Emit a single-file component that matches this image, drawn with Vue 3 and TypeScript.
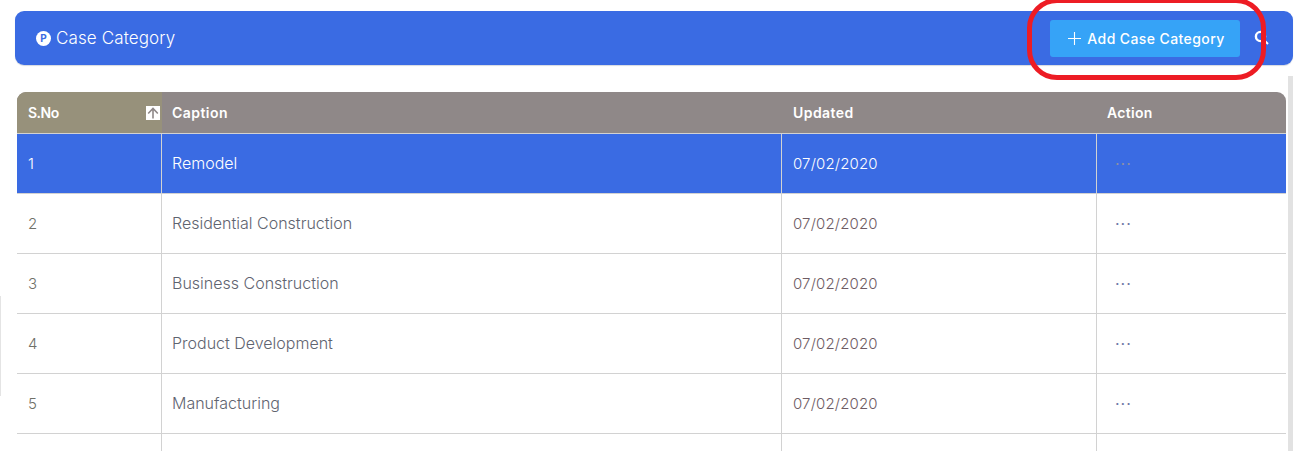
<script setup lang="ts">
interface Row { no: number; caption: string; updated: string }
const rows: Row[] = [
  { no: 1, caption: 'Remodel', updated: '07/02/2020' },
  { no: 2, caption: 'Residential Construction', updated: '07/02/2020' },
  { no: 3, caption: 'Business Construction', updated: '07/02/2020' },
  { no: 4, caption: 'Product Development', updated: '07/02/2020' },
  { no: 5, caption: 'Manufacturing', updated: '07/02/2020' },
  { no: 6, caption: '', updated: '' },
]
</script>

<template>
  <div class="page">
    <header class="bar">
      <div class="title">
        <span class="badge">P</span>
        <span class="title-text">Case Category</span>
      </div>
      <div class="tools">
        <button class="add" type="button">
          <svg class="plus" width="13" height="13" viewBox="0 0 13 13"><path d="M6.5 0v13M0 6.5h13" stroke="#fff" stroke-width="1.1" fill="none" /></svg>
          <span>Add Case Category</span>
        </button>
        <svg class="search" width="16" height="16" viewBox="0 0 16 16"><circle cx="6.5" cy="6.5" r="4.6" fill="none" stroke="#fff" stroke-width="2.4" /><path d="M10 10l4 4" stroke="#fff" stroke-width="2" /></svg>
      </div>
    </header>
    <div class="ring"></div>
    <div class="content">
      <div class="table">
        <div class="row head">
          <div class="cell sno"><span class="sno-label">S.No</span>
            <span class="sort"><svg width="14" height="14" viewBox="0 0 14 14"><rect width="14" height="14" fill="#fff" /><path d="M7 12.5V2.5M2.2 7.5L7 2.5l4.8 5" fill="none" stroke="#8f8888" stroke-width="1.6" /></svg></span>
          </div>
          <div class="cell">Caption</div>
          <div class="cell">Updated</div>
          <div class="cell">Action</div>
        </div>
        <div v-for="r in rows" :key="r.no" class="row body" :class="{ active: r.no === 1 }">
          <div class="cell num">{{ r.no === 6 ? '' : r.no }}</div>
          <div class="cell cap">{{ r.caption }}</div>
          <div class="cell date">{{ r.updated }}</div>
          <div class="cell act"><span v-if="r.no !== 6" class="dots">···</span></div>
        </div>
      </div>
      <div class="scroll"></div>
    </div>
    <div class="sliver"></div>
  </div>
</template>

<style>
html, body { margin: 0; background: #fff; overflow: hidden; }
</style>

<style scoped>
.page {
  position: relative;
  width: 1312px;
  height: 451px;
  overflow: hidden;
  padding: 11px 19px 0 15px;
  box-sizing: border-box;
  font-family: "Inter", "Open Sans", sans-serif;
  color: #fff;
}
.bar {
  height: 54px;
  background: #3a6be3;
  border-radius: 9px;
  box-shadow: 0 1px 1px #d5d9e0;
  display: flex;
  align-items: center;
  justify-content: space-between;
  padding: 0 23px 0 21px;
}
.title { display: flex; align-items: center; gap: 5px; }
.badge {
  width: 15px;
  height: 15px;
  border-radius: 50%;
  background: #fff;
  color: #3a6be3;
  font-size: 10px;
  font-weight: 700;
  display: flex;
  align-items: center;
  justify-content: center;
}
.title-text { font-size: 17px; font-weight: 300; letter-spacing: 0.12px; }
.tools { display: flex; align-items: center; gap: 14px; }
.add {
  width: 190px;
  height: 37px;
  background: #36a3f7;
  border: 0;
  border-radius: 3px;
  color: #fff;
  font: 500 14px "Inter", sans-serif;
  letter-spacing: 0.4px;
  display: flex;
  align-items: center;
  justify-content: center;
  gap: 6px;
  padding: 0 0 0 3px;
}
.ring {
  position: absolute;
  left: 1027px;
  top: -2px;
  width: 239px;
  height: 82px;
  box-sizing: border-box;
  border: 5px solid #ed1c24;
  border-radius: 30px;
}
.content { display: flex; margin-top: 11px; gap: 2px; }
.table { width: 1269px; margin: 16px 0 0 2px; }
.row {
  display: grid;
  grid-template-columns: 145px 620px 315px 1fr;
}
.head {
  height: 42px;
  background: #8f8888;
  border-radius: 9px 9px 0 0;
  border-bottom: 1px solid #d2d2d2;
  box-sizing: border-box;
  overflow: hidden;
  font-size: 14px;
  font-weight: 600;
  letter-spacing: 0.45px;
}
.head .cell { display: flex; align-items: center; padding-left: 11px; }
.head .sno { background: #97917b; position: relative; padding-left: 11px; }
.sno-label { letter-spacing: -0.5px; }
.sort { position: absolute; right: 2px; top: 14px; height: 14px; }
.head .cell:nth-child(2) { padding-left: 10px; }
.head .cell:nth-child(4) { padding-left: 10px; letter-spacing: 0.3px; }
.body {
  height: 60px;
  box-sizing: border-box;
  border-bottom: 1px solid #d2d2d2;
  font-size: 15px;
  font-weight: 300;
  color: #5f6470;
}
.body .cell {
  display: flex;
  align-items: center;
  padding-left: 11px;
  border-right: 1px solid #d2d2d2;
}
.body .cap { padding-left: 10px; padding-bottom: 1px; font-size: 16px; letter-spacing: 0; }
.body .date { letter-spacing: 0.15px; }
.body .cell:last-child { border-right: 0; padding-left: 18px; }
.body .num { color: #6f7068; }
.body .date { color: #6e5c64; }
.body.active { background: #3a6be3; color: #fff; }
.body.active .cell { color: #fff; }
.dots { color: #6f78a6; font-size: 16px; font-weight: 400; letter-spacing: 1px; }
.body.active .cell .dots { color: #8d90a4; }
.scroll {
  width: 5px;
  height: 400px;
  background: #e2e2e2;
}
.sliver {
  position: absolute;
  left: 0;
  top: 296px;
  width: 1px;
  height: 100px;
  background: #e4e4e4;
}
</style>
